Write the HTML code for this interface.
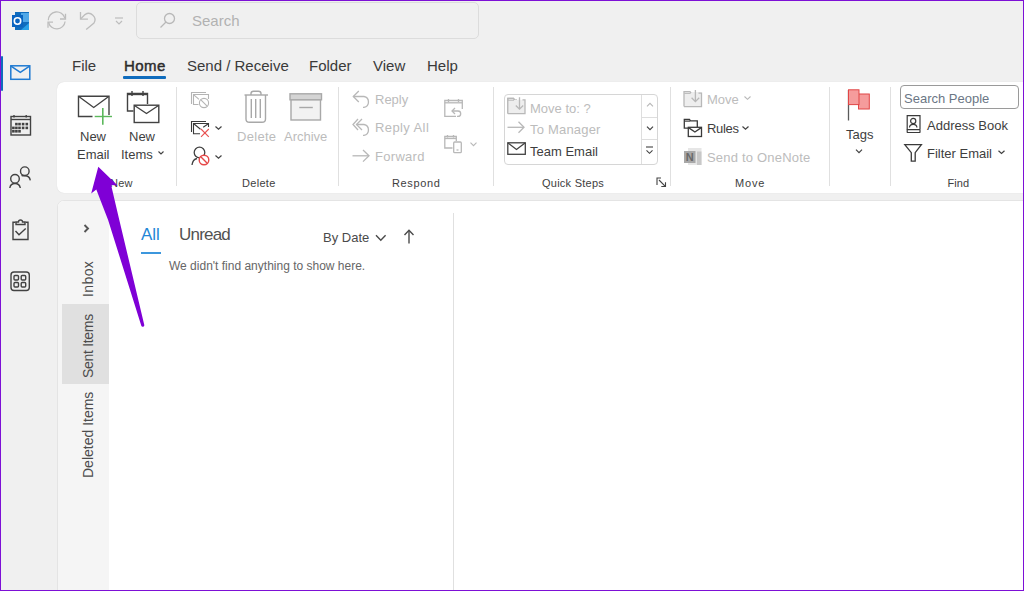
<!DOCTYPE html>
<html><head><meta charset="utf-8">
<style>
*{margin:0;padding:0;box-sizing:border-box}
html,body{width:1024px;height:591px;overflow:hidden;background:#f0f0f0}
body{position:relative;font-family:"Liberation Sans",sans-serif;color:#3e3e3e}
.a{position:absolute;white-space:nowrap;line-height:1}
svg{position:absolute;overflow:visible}
.dis{color:#bcbcbc}
</style></head><body>

<!-- title bar -->
<svg style="left:11px;top:11px" width="20" height="20" viewBox="0 0 20 20">
  <rect x="4" y="1" width="14" height="18" fill="#0f6cbd"/>
  <rect x="10" y="2" width="8" height="9" fill="#50a8e8"/>
  <path d="M10 19 L18 12 L18 19 Z" fill="#28a0e8"/>
  <rect x="1" y="4" width="11" height="12" fill="#0a64c0"/>
  <circle cx="6.5" cy="10" r="3.2" fill="none" stroke="#fff" stroke-width="1.6"/>
</svg>

<!-- sync -->
<svg style="left:47px;top:11px" width="20" height="20" viewBox="0 0 20 20" fill="none" stroke="#bdbdbd" stroke-width="1.3">
  <path d="M1.3 9.3 A8.4 8.4 0 0 1 17.8 7.1"/>
  <path d="M18.5 2.7 V8 H13"/>
  <path d="M18.1 10.5 A8.4 8.4 0 0 1 1.6 11.5"/>
  <path d="M1 16.7 V11.2 H6"/>
</svg>
<!-- undo -->
<svg style="left:79px;top:11px" width="20" height="20" viewBox="0 0 20 20" fill="none" stroke="#bdbdbd" stroke-width="1.3">
  <path d="M1.5 0.9 V8.1 H8.9"/>
  <path d="M1.8 7.8 L6 3.6 A6.3 6.3 0 0 1 15 12 L7.2 18.5"/>
</svg>
<!-- qat dropdown -->
<svg style="left:114px;top:17px" width="10" height="9" viewBox="0 0 10 9" fill="none" stroke="#bdbdbd" stroke-width="1.2">
  <path d="M1 1 H9"/><path d="M2 4 L5 7 L8 4"/>
</svg>

<!-- search box -->
<div class="a" style="left:136px;top:2px;width:343px;height:37px;border:1px solid #dcdcdc;border-radius:5px;background:#f0f0f0"></div>
<svg style="left:159px;top:12px" width="18" height="18" viewBox="0 0 18 18" fill="none" stroke="#b8b8b8" stroke-width="1.3">
  <circle cx="10.5" cy="6.5" r="5"/><path d="M7 10 L1.5 15.5"/>
</svg>
<div class="a" style="left:192px;top:13px;font-size:15px;color:#b2b2b2">Search</div>

<!-- left app bar -->
<div class="a" style="left:1px;top:56px;width:2px;height:35px;background:#0f6cbd;border-radius:1px"></div>
<svg style="left:9px;top:64px" width="23" height="17" viewBox="0 0 23 17" fill="none" stroke="#1f7ad2" stroke-width="1.5">
  <rect x="1.8" y="1.8" width="19" height="13.5"/>
  <path d="M2 2.2 L11.3 8.3 L20.6 2.2"/>
</svg>
<svg style="left:9px;top:114px" width="23" height="23" viewBox="0 0 23 23" fill="none" stroke="#424242" stroke-width="1.4">
  <rect x="2" y="2.5" width="19.5" height="18.5"/>
  <path d="M2 5.5 H21.5"/>
  <path d="M5 1 V3.5 M17.2 1 V3.5"/>
  <g fill="#424242" stroke="none"><rect x="6.1" y="8.8" width="2.6" height="2.6"/><rect x="9.2" y="8.8" width="2.6" height="2.6"/><rect x="12.8" y="8.8" width="2.6" height="2.6"/><rect x="16.5" y="8.8" width="2.6" height="2.6"/><rect x="3.1" y="12.6" width="2.6" height="2.6"/><rect x="6.1" y="12.6" width="2.6" height="2.6"/><rect x="9.2" y="12.6" width="2.6" height="2.6"/><rect x="12.8" y="12.6" width="2.6" height="2.6"/><rect x="16.5" y="12.6" width="2.6" height="2.6"/><rect x="3.1" y="16.0" width="2.6" height="2.6"/><rect x="6.1" y="16.0" width="2.6" height="2.6"/><rect x="9.2" y="16.0" width="2.6" height="2.6"/></g>
</svg>
<svg style="left:8px;top:165px" width="25" height="25" viewBox="0 0 25 25" fill="none" stroke="#424242" stroke-width="1.4">
  <circle cx="7" cy="13.8" r="4.3"/>
  <path d="M1.8 23 Q2.5 18.5 7 18.5 Q11.5 18.5 12.3 23"/>
  <circle cx="16.8" cy="6.2" r="4.3"/>
  <path d="M13.5 10.3 Q14.5 10.8 16.8 10.8 Q21.5 10.8 22.3 15.3"/>
</svg>
<svg style="left:11px;top:219px" width="19" height="22" viewBox="0 0 19 22" fill="none" stroke="#424242" stroke-width="1.4">
  <path d="M4.5 3.3 H2 V20.5 H17 V3.3 H14.5"/>
  <path d="M5 5.5 H14 V3 H11.5 Q11.5 1 9.5 1 Q7.5 1 7.5 3 H5 Z"/>
  <path d="M4.5 12 L8 15.7 L14.7 9.5"/>
</svg>
<svg style="left:9px;top:270px" width="22" height="22" viewBox="0 0 22 22" fill="none" stroke="#424242" stroke-width="1.4">
  <rect x="2" y="2" width="18.3" height="18.5" rx="3"/>
  <rect x="5" y="5.5" width="4.5" height="4.5" rx="1"/><rect x="12.2" y="5.5" width="4.5" height="4.5" rx="1"/>
  <rect x="5" y="12.5" width="4.5" height="4.5" rx="1"/><rect x="12.2" y="12.5" width="4.5" height="4.5" rx="1"/>
</svg>

<!-- menu tabs -->
<div class="a" style="left:72px;top:58px;font-size:15px;color:#3a3a3a">File</div>
<div class="a" style="left:124px;top:58px;font-size:15px;color:#2c2c2c;-webkit-text-stroke:0.45px #2c2c2c;letter-spacing:0.45px">Home</div>
<div class="a" style="left:123px;top:76px;width:43px;height:3px;background:#0f6cbd;border-radius:1px"></div>
<div class="a" style="left:187px;top:58px;font-size:15px;color:#3a3a3a">Send / Receive</div>
<div class="a" style="left:309px;top:58px;font-size:15px;color:#3a3a3a">Folder</div>
<div class="a" style="left:373px;top:58px;font-size:15px;color:#3a3a3a">View</div>
<div class="a" style="left:427px;top:58px;font-size:15px;color:#3a3a3a">Help</div>

<!-- ribbon -->
<div class="a" style="left:57px;top:82px;width:980px;height:111px;background:#fff;border-radius:7px;box-shadow:0 0 1px rgba(0,0,0,.15)"></div>

<!-- content pane -->
<div class="a" style="left:57px;top:200px;width:980px;height:400px;background:#fff;border-radius:7px;border:1px solid #e4e4e4"></div>
<div class="a" style="left:58px;top:201px;width:51px;height:400px;background:#f5f5f5;border-top-left-radius:6px"></div>
<div class="a" style="left:62px;top:304px;width:47px;height:80px;background:#e0e0e0"></div>
<div class="a" style="left:453px;top:213px;width:1px;height:380px;background:#e0e0e0"></div>


<!-- ===== RIBBON CONTENT ===== -->
<!-- New Email icon -->
<svg style="left:77px;top:95px" width="36" height="31" viewBox="0 0 36 31" fill="none" stroke="#424242" stroke-width="1.4">
  <path d="M15.5 21.5 H1.5 V1.2 H32 V20"/>
  <path d="M1.8 1.5 L16.7 12.5 L31.7 1.5"/>
  <path d="M17.7 21.5 H35" stroke="#5cb85c" stroke-width="1.4"/>
  <path d="M25.8 13 V29.7" stroke="#5cb85c" stroke-width="1.6"/>
</svg>
<div class="a" style="left:80px;top:130px;font-size:13px">New</div>
<div class="a" style="left:77px;top:148px;font-size:13px">Email</div>

<!-- New Items icon -->
<svg style="left:126px;top:90px" width="35" height="34" viewBox="0 0 35 34" fill="none" stroke="#424242" stroke-width="1.4">
  <path d="M7.5 21 H1.5 V3.5 H21.5 V14"/>
  <path d="M1.5 4.5 H21.5"/>
  <path d="M6 1 V6 M17 1 V6"/>
  <rect x="8.2" y="15.2" width="24.6" height="17.3" fill="#fff"/>
  <path d="M8.5 15.5 L20.5 23.5 L32.5 15.5"/>
</svg>
<div class="a" style="left:129px;top:130px;font-size:13px">New</div>
<div class="a" style="left:121px;top:148px;font-size:13px">Items</div>
<svg style="left:158px;top:151px" width="6" height="4" viewBox="0 0 6 4" fill="none" stroke="#424242" stroke-width="1.1"><path d="M0.5 0.5 L3 3 L5.5 0.5"/></svg>
<div class="a" style="left:110px;top:178px;font-size:11px;letter-spacing:0.2px">New</div>

<div class="a" style="left:176px;top:87px;width:1px;height:99px;background:#e0e0e0"></div>

<!-- Delete group small icons -->
<svg style="left:190px;top:91px" width="20" height="18" viewBox="0 0 20 18" fill="none" stroke="#b4b4b4" stroke-width="1.1">
  <path d="M1.5 13 V1.5 H16"/>
  <path d="M8.5 13.5 H3.5 V3.5 H18.5 V8"/>
  <path d="M3.8 3.8 L9 8.3"/>
  <circle cx="14" cy="12" r="4.6" fill="#fff"/>
  <path d="M10.9 8.9 L17.1 15.1"/>
</svg>
<svg style="left:190px;top:120px" width="20" height="18" viewBox="0 0 20 18" fill="none" stroke="#3a3a3a" stroke-width="1.1">
  <path d="M1.5 12 V1.5 H16"/>
  <path d="M10 13.8 H3.5 V3.5 H18.5 V7"/>
  <path d="M3.8 3.8 L10.5 9.2 M13.2 7.2 L18.3 3.8"/>
  <path d="M11 9 L18.8 16.8 M18.8 9 L11 16.8" stroke="#e85050" stroke-width="1.1"/>
</svg>
<svg style="left:215px;top:126px" width="7" height="4" viewBox="0 0 7 4" fill="none" stroke="#424242" stroke-width="1.2"><path d="M0.5 0.5 L3.5 3.3 L6.5 0.5"/></svg>
<svg style="left:191px;top:146px" width="20" height="20" viewBox="0 0 20 20" fill="none" stroke="#424242" stroke-width="1.3">
  <circle cx="8.5" cy="6.5" r="5.3"/>
  <path d="M1 19 C1.5 15 3.5 13 6 12.5"/>
  <circle cx="13" cy="14" r="4.8" fill="#fff" stroke="#e54848" stroke-width="1.4"/>
  <path d="M9.8 10.8 L16.2 17.2" stroke="#e54848" stroke-width="1.4"/>
</svg>
<svg style="left:215px;top:155px" width="7" height="4" viewBox="0 0 7 4" fill="none" stroke="#424242" stroke-width="1.2"><path d="M0.5 0.5 L3.5 3.3 L6.5 0.5"/></svg>

<!-- Trash -->
<svg style="left:244px;top:90px" width="25" height="34" viewBox="0 0 25 34" fill="none" stroke="#a8a8a8" stroke-width="1.4">
  <path d="M0.5 5 H24"/>
  <path d="M7 5 V3.5 Q7 1.3 9.5 1.3 H14.5 Q17 1.3 17 3.5 V5"/>
  <path d="M2 5 V29 Q2 32.3 5.5 32.3 H18 Q21.5 32.3 21.5 29 V5"/>
  <path d="M7.3 9 V28 M11.7 9 V28 M16.3 9 V28"/>
</svg>
<!-- Archive -->
<svg style="left:289px;top:93px" width="34" height="29" viewBox="0 0 34 29" fill="none" stroke="#a8a8a8" stroke-width="1.4">
  <rect x="2" y="6.5" width="29.5" height="20.5" fill="#f2f2f2"/>
  <rect x="1" y="0.8" width="31.5" height="6" fill="#d4d4d4"/>
  <path d="M10.3 14.5 H23.8"/>
</svg>
<div class="a dis" style="left:237px;top:130px;font-size:13px;letter-spacing:0.3px">Delete</div>
<div class="a dis" style="left:284px;top:130px;font-size:13px">Archive</div>
<div class="a" style="left:242px;top:178px;font-size:11px;letter-spacing:0.3px">Delete</div>

<div class="a" style="left:338px;top:87px;width:1px;height:99px;background:#e0e0e0"></div>

<!-- Respond -->
<svg style="left:352px;top:90px" width="20" height="19" viewBox="0 0 20 19" fill="none" stroke="#b8b8b8" stroke-width="1.3">
  <path d="M6.8 1 L1.3 6.5 L6.8 12"/>
  <path d="M1.3 6.5 H12 A5.5 5.5 0 0 1 12 17.3 H11"/>
</svg>
<div class="a dis" style="left:375px;top:93px;font-size:13px">Reply</div>
<svg style="left:352px;top:118px" width="20" height="19" viewBox="0 0 20 19" fill="none" stroke="#b8b8b8" stroke-width="1.3">
  <path d="M6 1 L1 6.5 L6 12"/>
  <path d="M10 1 L4.5 6.5 L10 12"/>
  <path d="M4.5 6.5 H12 A5.5 5.5 0 0 1 12 17.3 H11"/>
</svg>
<div class="a dis" style="left:375px;top:121px;font-size:13px;letter-spacing:0.4px">Reply All</div>
<svg style="left:352px;top:149px" width="19" height="14" viewBox="0 0 19 14" fill="none" stroke="#b8b8b8" stroke-width="1.3">
  <path d="M0.5 6.8 H17"/>
  <path d="M11 1 L17 6.8 L11 12.6"/>
</svg>
<div class="a dis" style="left:375px;top:150px;font-size:13px;letter-spacing:0.3px">Forward</div>

<svg style="left:444px;top:98px" width="20" height="20" viewBox="0 0 20 20" fill="none" stroke="#b8b8b8" stroke-width="1.3">
  <path d="M12 18.3 H0.8 V2.5 H18.3 V11"/>
  <path d="M0.8 4.8 H18.3"/>
  <path d="M4.5 1 V4 M14.5 1 V4"/>
  <path d="M11 10 L8 13 L11 16"/>
  <path d="M8 13 H14 A2.7 2.7 0 0 1 14 18.4 H13"/>
</svg>
<svg style="left:444px;top:134px" width="19" height="20" viewBox="0 0 19 20" fill="none" stroke="#b8b8b8" stroke-width="1.3">
  <path d="M8.5 14 H0.8 V2.5 H12.3 V7"/>
  <path d="M0.8 4.5 H12.3"/>
  <path d="M3.5 1 V3.5 M9.5 1 V3.5"/>
  <rect x="9.7" y="8" width="7.6" height="10.7" rx="1" fill="#fff"/>
  <path d="M12.5 16 H14.5"/>
</svg>
<svg style="left:470px;top:142px" width="7" height="5" viewBox="0 0 7 5" fill="none" stroke="#b8b8b8" stroke-width="1.1"><path d="M0.5 0.7 L3.5 3.7 L6.5 0.7"/></svg>
<div class="a" style="left:392px;top:178px;font-size:11px;letter-spacing:0.65px">Respond</div>

<div class="a" style="left:493px;top:87px;width:1px;height:99px;background:#e0e0e0"></div>

<!-- Quick steps -->
<div class="a" style="left:504px;top:94px;width:154px;height:71px;border:1px solid #d6d6d6;border-radius:4px"></div>
<div class="a" style="left:641px;top:95px;width:1px;height:69px;background:#dedede"></div>
<div class="a" style="left:641px;top:117px;width:16px;height:1px;background:#dedede"></div>
<div class="a" style="left:641px;top:139px;width:16px;height:1px;background:#dedede"></div>
<svg style="left:507px;top:97px" width="20" height="18" viewBox="0 0 20 18" fill="none" stroke="#b8b8b8" stroke-width="1.3">
  <path d="M0.8 16.6 V1.3 H6.5 L7.5 2.8 H10" fill="#eeeeee"/>
  <rect x="0.8" y="2.8" width="17.3" height="13.8" fill="#eeeeee" stroke="none"/>
  <path d="M0.8 16.6 V1.3 H6.5 L7.5 2.8 M15.5 2.8 H18 V16.6 H0.8"/>
  <path d="M1 3.2 H7" stroke-width="1"/>
  <path d="M12.5 0.3 V12 M8.8 8.5 L12.5 12.2 L16.2 8.5"/>
</svg>
<div class="a dis" style="left:530px;top:102px;font-size:13px">Move to: ?</div>
<svg style="left:507px;top:121px" width="19" height="13" viewBox="0 0 19 13" fill="none" stroke="#b8b8b8" stroke-width="1.3">
  <path d="M0.5 6.3 H17"/>
  <path d="M11.5 0.8 L17 6.3 L11.5 11.8"/>
</svg>
<div class="a dis" style="left:530px;top:123px;font-size:13px;letter-spacing:0.2px">To Manager</div>
<svg style="left:507px;top:142px" width="20" height="14" viewBox="0 0 20 14" fill="none" stroke="#424242" stroke-width="1.3">
  <rect x="0.8" y="0.8" width="17.5" height="11.5"/>
  <path d="M1 1 L9.5 7.5 L18 1"/>
</svg>
<div class="a" style="left:530px;top:145px;font-size:13px">Team Email</div>
<svg style="left:646px;top:102px" width="8" height="5" viewBox="0 0 8 5" fill="none" stroke="#b8b8b8" stroke-width="1.1"><path d="M1 4.3 L4 1.3 L7 4.3"/></svg>
<svg style="left:646px;top:126px" width="8" height="5" viewBox="0 0 8 5" fill="none" stroke="#424242" stroke-width="1.2"><path d="M1 0.7 L4 3.7 L7 0.7"/></svg>
<svg style="left:645px;top:146px" width="9" height="9" viewBox="0 0 9 9" fill="none" stroke="#424242" stroke-width="1.1"><path d="M1 1 H8"/><path d="M1.5 4.3 L4.5 7.3 L7.5 4.3"/></svg>
<div class="a" style="left:542px;top:178px;font-size:11px;letter-spacing:0.25px">Quick Steps</div>
<svg style="left:656px;top:177px" width="10" height="10" viewBox="0 0 10 10" fill="none" stroke="#424242" stroke-width="1.1">
  <path d="M1 8 V1 H5"/><path d="M3 3 L9.3 9.3"/><path d="M5.3 9.5 H9.5 V5.3"/>
</svg>

<div class="a" style="left:670px;top:87px;width:1px;height:99px;background:#e0e0e0"></div>

<!-- Move -->
<svg style="left:683px;top:90px" width="20" height="18" viewBox="0 0 20 18" fill="none" stroke="#b8b8b8" stroke-width="1.3">
  <rect x="1" y="2" width="17.5" height="14.6" fill="#eeeeee" stroke="none"/>
  <path d="M1 16.6 V1.7 H7 L8 3.2 M15.5 3.2 H18.5 V16.6 H1"/>
  <path d="M1.3 3.4 H7.5" stroke-width="1"/>
  <path d="M12.4 0 V11.6 M8.6 7.8 L12.4 11.6 L16.2 7.8"/>
</svg>
<div class="a dis" style="left:707px;top:93px;font-size:13px">Move</div>
<svg style="left:744px;top:96px" width="7" height="4" viewBox="0 0 7 4" fill="none" stroke="#b8b8b8" stroke-width="1.1"><path d="M0.5 0.5 L3.5 3.3 L6.5 0.5"/></svg>
<svg style="left:683px;top:118px" width="20" height="20" viewBox="0 0 20 20" fill="none" stroke="#3a3a3a" stroke-width="1.3">
  <path d="M5 10.2 H1.3 V1.5 H6.5 L7.5 2.8 H14.3 V9"/>
  <path d="M1.3 3.2 H7" stroke-width="1"/>
  <rect x="5.3" y="9.3" width="13.2" height="9.2" fill="#fff"/>
  <path d="M5.5 9.6 L11.9 14 L18.3 9.6"/>
</svg>
<div class="a" style="left:707px;top:122px;font-size:13px;letter-spacing:-0.3px">Rules</div>
<svg style="left:742px;top:126px" width="7" height="4" viewBox="0 0 7 4" fill="none" stroke="#424242" stroke-width="1.2"><path d="M0.5 0.5 L3.5 3.3 L6.5 0.5"/></svg>
<svg style="left:683px;top:147px" width="20" height="20" viewBox="0 0 20 20">
  <rect x="5" y="1" width="13.5" height="17" fill="#e6e6e6"/>
  <rect x="14" y="4.5" width="4.5" height="13.5" fill="#c8c8c8"/>
  <rect x="1" y="4" width="11.5" height="12" fill="#a8a8a8"/>
  <text x="2.8" y="14.3" font-family="Liberation Sans" font-size="11" font-weight="bold" fill="#686868">N</text>
</svg>
<div class="a dis" style="left:707px;top:151px;font-size:13px;letter-spacing:0.2px">Send to OneNote</div>
<div class="a" style="left:735px;top:178px;font-size:11px;letter-spacing:0.8px">Move</div>

<div class="a" style="left:829px;top:87px;width:1px;height:99px;background:#e0e0e0"></div>

<!-- Tags -->
<svg style="left:846px;top:88px" width="26" height="34" viewBox="0 0 26 34" fill="none">
  <path d="M2.5 2 V32.5" stroke="#5a5a5a" stroke-width="1.3"/>
  <rect x="12.5" y="6" width="10.8" height="15" fill="#f59c9c" stroke="#e04646" stroke-width="1"/>
  <rect x="2.5" y="1.8" width="10.5" height="14.8" fill="#f59c9c" stroke="#e04646" stroke-width="1"/>
</svg>
<div class="a" style="left:846px;top:128px;font-size:13px">Tags</div>
<svg style="left:855px;top:149px" width="8" height="5" viewBox="0 0 8 5" fill="none" stroke="#424242" stroke-width="1.2"><path d="M1 0.7 L4 3.7 L7 0.7"/></svg>

<div class="a" style="left:890px;top:87px;width:1px;height:99px;background:#e0e0e0"></div>

<!-- Find -->
<div class="a" style="left:900px;top:85px;width:119px;height:24px;border:1px solid #9a9a9a;border-radius:4px"></div>
<div class="a" style="left:904px;top:92px;font-size:13px;color:#6b7685">Search People</div>
<svg style="left:906px;top:114px" width="16" height="20" viewBox="0 0 16 20" fill="none" stroke="#3a3a3a" stroke-width="1.2">
  <path d="M1.2 16 V1.7 H14 V15.5"/>
  <rect x="1.2" y="15.6" width="12.8" height="2.9" rx="0.6"/>
  <circle cx="7.2" cy="6.9" r="2.6"/>
  <path d="M3.5 13.6 Q3.5 10.3 7.2 10.3 Q10.9 10.3 10.9 13.6"/>
</svg>
<div class="a" style="left:927px;top:119px;font-size:13px">Address Book</div>
<svg style="left:904px;top:143px" width="20" height="20" viewBox="0 0 20 20" fill="none" stroke="#3a3a3a" stroke-width="1.3">
  <path d="M0.8 1.7 H17.4 L11.2 9.7 V18.2 H7.3 V9.7 Z"/>
</svg>
<div class="a" style="left:927px;top:147px;font-size:13px">Filter Email</div>
<svg style="left:998px;top:150px" width="7" height="5" viewBox="0 0 7 5" fill="none" stroke="#424242" stroke-width="1.2"><path d="M0.5 0.7 L3.5 3.5 L6.5 0.7"/></svg>
<div class="a" style="left:947.5px;top:178px;font-size:11px;letter-spacing:0.1px">Find</div>

<!-- ===== CONTENT ===== -->
<svg style="left:83px;top:224px" width="7" height="9" viewBox="0 0 7 9" fill="none" stroke="#555" stroke-width="1.9"><path d="M1.5 1 L5 4.5 L1.5 8"/></svg>
<div class="a" style="left:81px;top:297px;font-size:14px;color:#4c4c4c;transform:rotate(-90deg);letter-spacing:0.4px;transform-origin:0 0">Inbox</div>
<div class="a" style="left:81px;top:378px;font-size:14px;color:#4c4c4c;transform:rotate(-90deg);letter-spacing:-0.3px;transform-origin:0 0">Sent Items</div>
<div class="a" style="left:81px;top:478px;font-size:14px;color:#4c4c4c;transform:rotate(-90deg);transform-origin:0 0">Deleted Items</div>

<div class="a" style="left:141px;top:226px;font-size:17px;color:#1f86d6">All</div>
<div class="a" style="left:141px;top:252px;width:20px;height:2px;background:#3c97dd"></div>
<div class="a" style="left:179px;top:226px;font-size:17px;letter-spacing:-0.8px;color:#525252">Unread</div>
<div class="a" style="left:323px;top:231px;font-size:13px;color:#4a4a4a">By Date</div>
<svg style="left:375px;top:234px" width="12" height="8" viewBox="0 0 12 8" fill="none" stroke="#4a4a4a" stroke-width="1.4"><path d="M1 1.3 L5.8 6.3 L10.6 1.3"/></svg>
<svg style="left:403px;top:229px" width="12" height="15" viewBox="0 0 12 15" fill="none" stroke="#4a4a4a" stroke-width="1.4"><path d="M6 14.5 V1.5"/><path d="M1.5 6 L6 1.3 L10.5 6"/></svg>
<div class="a" style="left:169px;top:260px;font-size:12px;color:#666666">We didn't find anything to show here.</div>

<!-- arrow -->
<svg style="left:0;top:0" width="1024" height="591" viewBox="0 0 1024 591">
  <path d="M98.3 166.8 L117.6 185.4 L111.1 185 L119.3 220 L144.3 325 A1.55 1.55 0 0 1 141.3 325.7 L108.1 220 L96.3 189.5 L91.2 193.5 Z" fill="#7f00d6"/>
</svg>

<!-- purple frame -->
<div class="a" style="left:0;top:0;width:1024px;height:591px;border:1.5px solid #7d10d6"></div>

</body></html>
